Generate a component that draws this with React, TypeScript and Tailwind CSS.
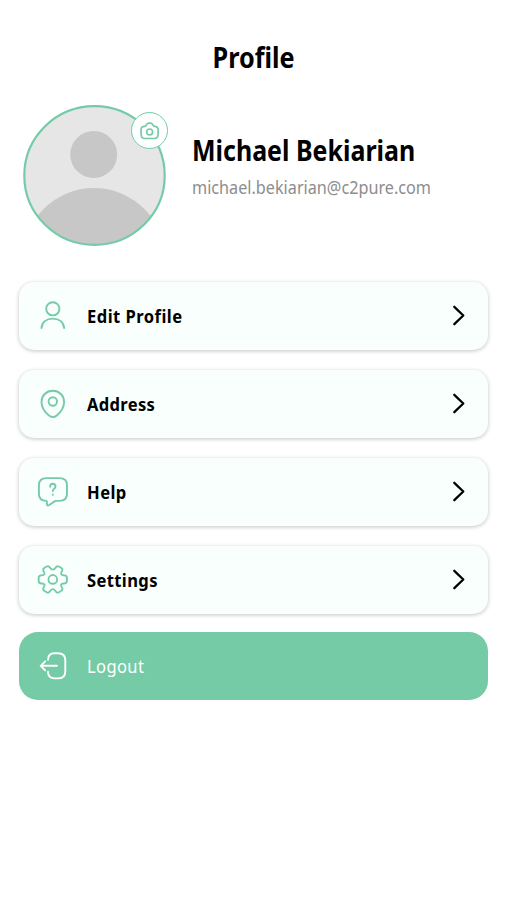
import type { ReactNode } from 'react';

function Icon({ children }: { children: ReactNode }) {
  return (
    <svg
      viewBox="0 0 34 34"
      className="h-[34px] w-[34px] shrink-0"
      fill="none"
      stroke="currentColor"
      strokeWidth="1.9"
      strokeLinecap="round"
      strokeLinejoin="round"
    >
      {children}
    </svg>
  );
}

const items = [
  {
    label: 'Edit Profile',
    labelClass: 'tracking-[0.5px]',
    icon: (
      <Icon>
        <circle cx="16.8" cy="9.8" r="6.6" />
        <path d="M5.5 29C5.8 23.2 10.3 19.6 16.8 19.6s11 3.6 11.3 9.4" />
      </Icon>
    ),
  },
  {
    label: 'Address',
    labelClass: 'tracking-[0.35px]',
    icon: (
      <Icon>
        <path d="M16.8 3.8C10.4 3.8 5.5 8.6 5.5 14.9c0 5.300 3.300 10 7.300 13.500 2.600 2.200 5.400 2.200 8 0 4-3.500 7.300-8.200 7.300-13.500C28.100 8.600 23.200 3.800 16.800 3.800z" />
        <circle cx="16.8" cy="14.5" r="4.2" />
      </Icon>
    ),
  },
  {
    label: 'Help',
    labelClass: 'tracking-[0.5px]',
    icon: (
      <Icon>
        <path d="M10.3 25.9C5.4 25.9 2.900 23.300 2.900 18.800V10.200c0-4.500 2.500-7.100 7.400-7.100h13.300c4.900 0 7.400 2.600 7.400 7.100v8.600c0 4.500-2.500 7.100-7.400 7.100h-4.200l-6.500 4.400c-1 .7-2 .1-2-1v-2.400c0-.6-.1-1-.6-1z" />
        <path d="M14.1 11.7c0-1.700 1.100-2.900 2.700-2.900s2.700 1.100 2.700 2.700c0 2.300-2.700 2.300-2.700 4.600M16.800 19.500v.2" />
      </Icon>
    ),
  },
  {
    label: 'Settings',
    labelClass: 'tracking-[0.4px]',
    icon: (
      <Icon>
        <g transform="translate(16.8 16.4) scale(0.97)">
          <circle r="4.5" />
          <path d="M0-10C1.500-10 2.300-11 3-12.200C3.700-13.400 5-13.900 6.300-13.300L8.500-12C9.800-11.300 10.200-10 9.600-8.700C8.800-7.200 8-6.200 8.600-5.200C9.200-4.200 10.500-4.300 12-4.200C13.800-4.100 14.600-2.900 14.600-1.500V1.500C14.600 2.900 13.800 4.100 12 4.200C10.500 4.300 9.200 4.200 8.600 5.200C8 6.200 8.800 7.200 9.600 8.700C10.200 10 9.800 11.300 8.500 12L6.300 13.300C5 13.900 3.700 13.400 3 12.200C2.300 11 1.500 10 0 10C-1.500 10-2.300 11-3 12.200C-3.700 13.400-5 13.900-6.300 13.300L-8.500 12C-9.800 11.300-10.200 10-9.600 8.700C-8.800 7.200-8 6.200-8.600 5.200C-9.200 4.200-10.500 4.300-12 4.200C-13.800 4.100-14.600 2.900-14.600 1.500V-1.500C-14.600-2.900-13.800-4.100-12-4.200C-10.500-4.300-9.200-4.200-8.600-5.200C-8-6.200-8.800-7.200-9.600-8.700C-10.200-10-9.800-11.300-8.500-12L-6.300-13.300C-5-13.900-3.700-13.400-3-12.200C-2.300-11-1.500-10 0-10z" />
        </g>
      </Icon>
    ),
  },
];

function Avatar() {
  return (
    <div className="relative h-[142px] w-[143px] shrink-0">
      <svg viewBox="0 0 143 142" className="h-[142px] w-[143px]">
        <clipPath id="avatar">
          <circle cx="71.5" cy="70.5" r="69.5" />
        </clipPath>
        <g clipPath="url(#avatar)">
          <rect width="143" height="142" fill="#e6e6e6" />
          <circle cx="70.7" cy="49.5" r="23.5" fill="#c7c7c7" />
          <circle cx="71" cy="154" r="71" fill="#c7c7c7" />
        </g>
        <ellipse cx="71.5" cy="70.5" rx="70.2" ry="69.4" fill="none" stroke="#75cba8" strokeWidth="2.2" />
      </svg>
      <div className="absolute top-[7px] left-[108px] flex h-[37px] w-[37px] items-center justify-center rounded-full border-[1.5px] border-[#75cba8] bg-white text-[#75cba8]">
        <svg viewBox="0 0 20 18" className="h-[18px] w-5" fill="none" stroke="currentColor" strokeWidth="1.7" strokeLinejoin="round">
          <path d="M4.6 4.3c.9 0 1.300-.4 1.600-1.100C6.700 2 7.200 1.100 8.600 1.100h2c1.400 0 1.900.9 2.400 2.100.3.700.7 1.100 1.600 1.100 2.500 0 3.700 1.400 3.600 3.800l-.2 4.700c-.1 2.300-1.300 3.700-3.700 3.700H4.900c-2.400 0-3.600-1.400-3.700-3.700L1 8.100C.9 5.700 2.100 4.300 4.600 4.300z" />
          <circle cx="9.6" cy="10" r="3" />
        </svg>
      </div>
    </div>
  );
}

export default function App() {
  return (
    <main className="flex h-[900px] w-[507px] flex-col bg-white px-[19px] font-['Noto_Sans',sans-serif] text-black">
      <h1 className="mt-[37px] h-10 origin-center scale-x-[0.9] text-center text-[28px] leading-10 font-bold">Profile</h1>

      <section className="mt-7 flex pl-1">
        <Avatar />
        <div className="pt-[27px] pl-[26px]">
          <h2 className="h-9 origin-left scale-x-[0.892] text-[28px] leading-9 font-bold whitespace-nowrap">Michael Bekiarian</h2>
          <p className="mt-[7px] h-6 origin-left scale-x-[0.9] text-[18px] leading-6 whitespace-nowrap text-[#8d8d8d]">
            michael.bekiarian@c2pure.com
          </p>
        </div>
      </section>

      <nav className="mt-[35px] flex flex-col gap-5">
        {items.map((item) => (
          <button
            key={item.label}
            className="flex h-[68px] w-full items-center rounded-[15px] bg-[#f8fffd] pr-[23px] pl-[17px] shadow-[0_1px_4px_rgba(0,0,0,0.24)]"
          >
            <span className="text-[#75cba8]">{item.icon}</span>
            <span className={`ml-[17px] origin-left scale-x-[0.92] text-[18px] leading-6 font-bold ${item.labelClass}`}>
              {item.label}
            </span>
            <svg
              viewBox="0 0 14 22"
              className="ml-auto h-[22px] w-3.5"
              fill="none"
              stroke="black"
              strokeWidth="2.3"
              strokeLinecap="round"
              strokeLinejoin="round"
            >
              <path d="M3.3 1.8l9 8.700-9 8.700" />
            </svg>
          </button>
        ))}
      </nav>

      <button className="mt-[18px] flex h-[68px] w-full items-center rounded-[19px] bg-[#74cba6] pl-[17px] text-white">
        <Icon>
          <path d="M12 10.8c0-4.400 2.500-6.600 6.500-6.600H22c4.900 0 7.300 2.600 7.300 7.200v10.800c0 4.600-2.400 7.200-7.300 7.200h-3.500c-4 0-6.500-2.200-6.500-6.600M21 16.800H4.700M9.200 12.300l-4.500 4.500 4.500 4.500" />
        </Icon>
        <span className="ml-[17px] origin-left scale-x-[0.92] text-[18px] leading-6 tracking-[0.4px]">Logout</span>
      </button>
    </main>
  );
}
